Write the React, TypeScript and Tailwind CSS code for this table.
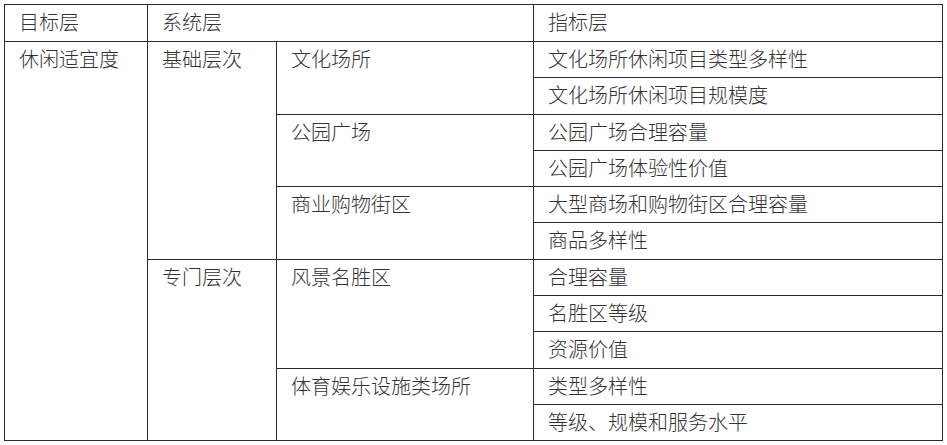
const rows: { a?: string; b?: string; bSpan?: number; c?: string; cSpan?: number; d: string; h: string }[] = [
  { a: "休闲适宜度", b: "基础层次", bSpan: 6, c: "文化场所", cSpan: 2, d: "文化场所休闲项目类型多样性", h: "h-[36px]" },
  { d: "文化场所休闲项目规模度", h: "h-[37px]" },
  { c: "公园广场", cSpan: 2, d: "公园广场合理容量", h: "h-[36px]" },
  { d: "公园广场体验性价值", h: "h-[36px]" },
  { c: "商业购物街区", cSpan: 2, d: "大型商场和购物街区合理容量", h: "h-[36px]" },
  { d: "商品多样性", h: "h-[37px]" },
  { b: "专门层次", bSpan: 5, c: "风景名胜区", cSpan: 3, d: "合理容量", h: "h-[36px]" },
  { d: "名胜区等级", h: "h-[36px]" },
  { d: "资源价值", h: "h-[37px]" },
  { c: "体育娱乐设施类场所", cSpan: 2, d: "类型多样性", h: "h-[36px]" },
  { d: "等级、规模和服务水平", h: "h-[36px]" },
];

const cell = "border border-[#2b2b2b] px-[14px] align-top leading-[34px] whitespace-nowrap";

export default function App() {
  return (
    <div className="w-[947px] h-[445px] bg-white pt-[4px] pl-[4px]">
      <table
        className="border-collapse table-fixed w-[938px] text-[20px] font-light text-[#333333]"
        style={{ fontFamily: '"Noto Sans CJK SC", "Noto Sans", sans-serif' }}
      >
        <colgroup>
          <col className="w-[143px]" />
          <col className="w-[129px]" />
          <col className="w-[257px]" />
          <col className="w-[409px]" />
        </colgroup>
        <tbody>
          <tr className="h-[37px]">
            <td className={cell}>目标层</td>
            <td className={cell} colSpan={2}>系统层</td>
            <td className={cell}>指标层</td>
          </tr>
          {rows.map((r, i) => (
            <tr key={i} className={r.h}>
              {r.a && (
                <td className={cell} rowSpan={11}>
                  {r.a}
                </td>
              )}
              {r.b && (
                <td className={cell} rowSpan={r.bSpan}>
                  {r.b}
                </td>
              )}
              {r.c && (
                <td className={cell} rowSpan={r.cSpan}>
                  {r.c}
                </td>
              )}
              <td className={cell}>{r.d}</td>
            </tr>
          ))}
        </tbody>
      </table>
    </div>
  );
}
